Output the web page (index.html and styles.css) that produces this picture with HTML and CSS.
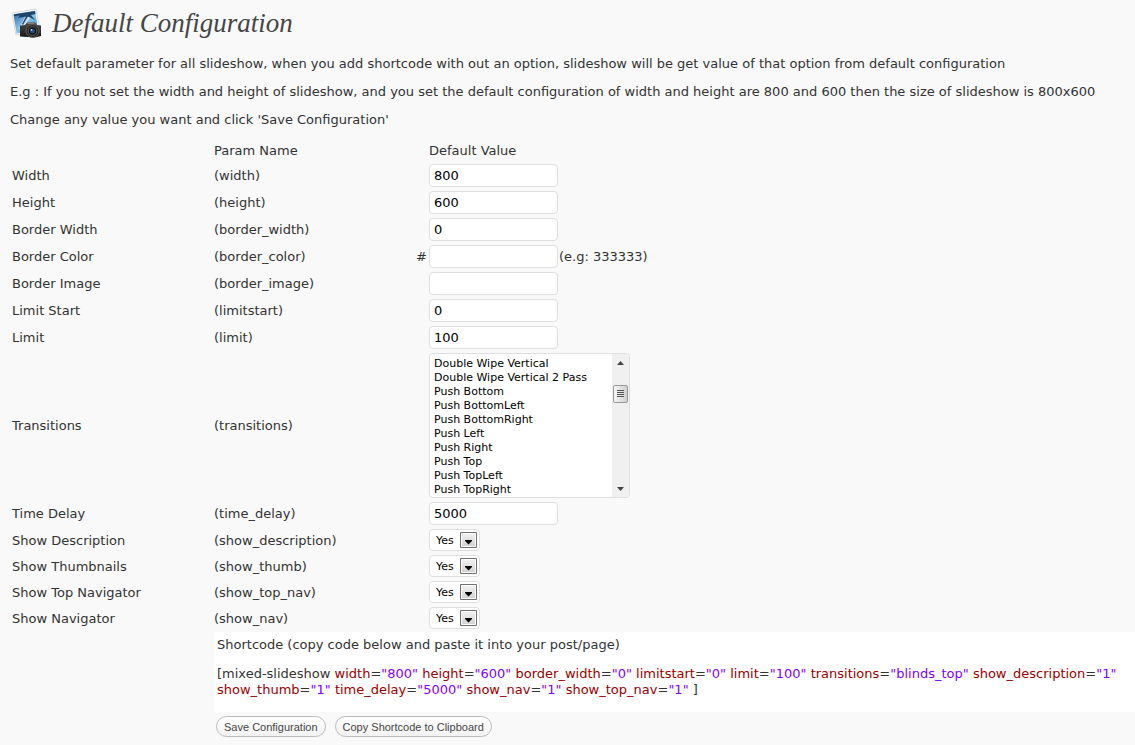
FILE: index.html
```html
<!DOCTYPE html>
<html lang="en">
<head>
<meta charset="utf-8">
<title>Default Configuration</title>
<link rel="stylesheet" href="styles.css">
</head>
<body>
<header class="page-head">
  <svg class="logo" width="32" height="32" viewBox="0 0 32 32" aria-hidden="true">
    <defs>
      <linearGradient id="sky" x1="0" y1="0" x2="1" y2="1"><stop offset="0" stop-color="#1d5a9c"/><stop offset=".5" stop-color="#8cc4e8"/><stop offset="1" stop-color="#1f74bd"/></linearGradient>
      <linearGradient id="cam" x1="0" y1="0" x2="0" y2="1"><stop offset="0" stop-color="#4d4a48"/><stop offset="1" stop-color="#171616"/></linearGradient>
    </defs>
    <path d="M1 5 25 1 29 23 5 27Z" fill="#fff" stroke="#c4c8cc" stroke-width=".7"/>
    <path d="M2.500 6.300 24 2.800 27 21 5.500 25.500Z" fill="url(#sky)"/>
    <path d="M14 9 8 21 14 18 19 9Z" fill="#e4f3fb" opacity=".8"/>
    <path d="M3 6.500 24 3 24.500 6 20 7 24 12 17 8.500 12 17 11 16 15 8.500 7 10 9 7.500 3 8Z" fill="#18395f" opacity=".9"/>
    <path d="M9 17.500 14 17 16 14.500H24L26 17 30 17.500V28L24 29.500 9 28.500Z" fill="url(#cam)"/>
    <path d="M16.500 15.500H23.500" stroke="#85807c"/>
    <circle cx="21.500" cy="23" r="6.500" fill="#252423" stroke="#77736f" stroke-width=".7"/>
    <circle cx="21.500" cy="23" r="4.300" fill="#080d15" stroke="#888" stroke-width=".6"/>
    <circle cx="21.500" cy="23" r="2.500" fill="#29496d"/>
    <circle cx="20.500" cy="21.800" r=".9" fill="#d4e6f5"/>
  </svg>
  <h1>Default Configuration</h1>
</header>
<main>
  <p>Set default parameter for all slideshow, when you add shortcode with out an option, slideshow will be get value of that option from default configuration</p>
  <p>E.g : If you not set the width and height of slideshow, and you set the default configuration of width and height are 800 and 600 then the size of slideshow is 800x600</p>
  <p>Change any value you want and click 'Save Configuration'</p>
  <form>
    <table class="params">
      <colgroup><col class="c-label"><col class="c-name"><col class="c-hash"><col></colgroup>
      <thead><tr><td></td><th scope="col">Param Name</th><td></td><th scope="col">Default Value</th></tr></thead>
      <tbody>
        <tr><td><label for="width">Width</label></td><td class="name">(width)</td><td></td><td><input type="text" id="width" value="800"></td></tr>
        <tr><td><label for="height">Height</label></td><td class="name">(height)</td><td></td><td><input type="text" id="height" value="600"></td></tr>
        <tr><td><label for="bw">Border Width</label></td><td class="name">(border_width)</td><td></td><td><input type="text" id="bw" value="0"></td></tr>
        <tr><td><label for="bc">Border Color</label></td><td class="name">(border_color)</td><td>#</td><td><input type="text" id="bc"><span class="hint">(e.g: 333333)</span></td></tr>
        <tr><td><label for="bi">Border Image</label></td><td class="name">(border_image)</td><td></td><td><input type="text" id="bi"></td></tr>
        <tr><td><label for="ls">Limit Start</label></td><td class="name">(limitstart)</td><td></td><td><input type="text" id="ls" value="0"></td></tr>
        <tr><td><label for="limit">Limit</label></td><td class="name">(limit)</td><td></td><td><input type="text" id="limit" value="100"></td></tr>
        <tr class="tall"><td><label for="transitions">Transitions</label></td><td class="name">(transitions)</td><td></td><td>
          <div class="listbox">
            <select class="list" id="transitions" multiple size="10"></select>
            <div class="scrollbar" aria-hidden="true">
              <svg width="17" height="17"><path d="M5 11 8.500 7 12 11Z" fill="#444"/></svg>
              <svg class="thumb" width="17" height="18">
                <defs><linearGradient id="grip"><stop stop-color="#f7f7f7"/><stop offset="1" stop-color="#cfcfcf"/></linearGradient></defs>
                <rect x="1.500" y=".5" width="14" height="17" rx="1.500" fill="url(#grip)" stroke="#979797"/>
                <path d="M5 5.500h7M5 7.500h7M5 9.500h7M5 11.500h7" stroke="#555"/>
              </svg>
              <svg width="17" height="17"><path d="M5 7 8.500 11 12 7Z" fill="#444"/></svg>
            </div>
          </div>
        </td></tr>
        <tr><td><label for="td">Time Delay</label></td><td class="name">(time_delay)</td><td></td><td><input type="text" id="td" value="5000"></td></tr>
        <tr class="pick"><td><label for="sd">Show Description</label></td><td class="name">(show_description)</td><td></td><td><select class="yes" id="sd"><option>Yes</option><option>No</option></select></td></tr>
        <tr class="pick"><td><label for="st">Show Thumbnails</label></td><td class="name">(show_thumb)</td><td></td><td><select class="yes" id="st"><option>Yes</option><option>No</option></select></td></tr>
        <tr class="pick"><td><label for="stn">Show Top Navigator</label></td><td class="name">(show_top_nav)</td><td></td><td><select class="yes" id="stn"><option>Yes</option><option>No</option></select></td></tr>
        <tr class="pick"><td><label for="sn">Show Navigator</label></td><td class="name">(show_nav)</td><td></td><td><select class="yes" id="sn"><option>Yes</option><option>No</option></select></td></tr>
      </tbody>
    </table>
    <div class="result">
      <section class="shortcode">
        <div>Shortcode (copy code below and paste it into your post/page)</div>
        <div class="code">[mixed-slideshow <b>width</b>=<i>"800"</i> <b>height</b>=<i>"600"</i> <b>border_width</b>=<i>"0"</i> <b>limitstart</b>=<i>"0"</i> <b>limit</b>=<i>"100"</i> <b>transitions</b>=<i>"blinds_top"</i> <b>show_description</b>=<i>"1"</i> <b>show_thumb</b>=<i>"1"</i> <b>time_delay</b>=<i>"5000"</i> <b>show_nav</b>=<i>"1"</i> <b>show_top_nav</b>=<i>"1"</i> ]</div>
      </section>
      <div class="actions"><button type="button">Save Configuration</button><button type="button">Copy Shortcode to Clipboard</button></div>
    </div>
  </form>
</main>
<script src="script.js"></script>
</body>
</html>
```
FILE: styles.css
```css
* { box-sizing: border-box; }
body {
  margin: 0;
  padding: 6px 0 8px 10px;
  background: #f9f9f9;
  color: #333;
  font: 13px/16px "DejaVu Sans", Verdana, sans-serif;
}
.page-head { display: flex; align-items: center; gap: 9px; height: 34px; }
.logo { display: block; margin-top: 2px; margin-left: 1px; }
h1 {
  margin: 0;
  color: #464646;
  font: italic 27px/34px Georgia, "Liberation Serif", serif;
}
main { padding-top: 16px; }
p { margin: 0 0 12px; }
.params { width: 100%; table-layout: fixed; border-collapse: collapse; }
.c-label, .c-name { width: 202px; }
.c-hash { width: 15px; }
.params td, .params th {
  height: 27px;
  padding: 0 2px;
  text-align: left;
  vertical-align: middle;
  font-weight: normal;
}
.params thead td, .params thead th { height: 22px; }
.params td:nth-child(4), .params th:last-child { padding-left: 0; }
.params .tall td { height: 149px; }
.params .pick td { height: 26px; }
.params .pick td:not(:last-child) { padding-top: 2px; }
input, .listbox, .yes {
  border: 1px solid #dfdfdf;
  border-radius: 4px;
  background: #fff;
  color: #000;
  vertical-align: middle;
}
input {
  width: 129px;
  height: 23px;
  padding: 3px 4px;
  font: 13px/15px "DejaVu Sans", Verdana, sans-serif;
}
.hint { padding-left: 1px; vertical-align: middle; }
.listbox {
  display: flex;
  width: 201px;
  height: 145px;
  overflow: hidden;
}
.list {
  flex: 1;
  min-width: 0;
  margin: 3px 0 0;
  padding: 0;
  border: 0;
  outline: 0;
  background: transparent;
  color: #000;
  font: 11px/14px "DejaVu Sans", Verdana, sans-serif;
  scrollbar-width: none;
}
.list option { height: 14px; min-height: 14px; padding: 0 4px; line-height: 14px; }
.scrollbar {
  display: flex;
  flex-direction: column;
  width: 17px;
  background: #f0f0f0;
}
.thumb { margin: 14px 0 auto; }
.yes {
  display: block;
  appearance: none;
  width: 51px;
  height: 22px;
  padding: 1px 20px 0 6px;
  background: #fff url("data:image/svg+xml,%3Csvg xmlns='http://www.w3.org/2000/svg' width='17' height='16'%3E%3Cdefs%3E%3ClinearGradient id='g' x2='0' y2='1'%3E%3Cstop stop-color='%23f4f4f4'/%3E%3Cstop offset='1' stop-color='%23cfcfcf'/%3E%3C/linearGradient%3E%3C/defs%3E%3Cpath d='M.5.5h16v15H.5z' fill='url(%23g)' stroke='%23707070'/%3E%3Cpath d='M1.500 1.500h14v13h-14z' fill='none' stroke='%23fff'/%3E%3Cpath d='M5 8h7v1L8.500 12.500 5 9z'/%3E%3C/svg%3E") right 2px center no-repeat;
  font: 11px/20px "DejaVu Sans", Verdana, sans-serif;
}
.result { display: flex; flex-direction: column; margin-left: 204px; }
.shortcode { min-height: 80px; margin-top: 1px; padding: 5px 3px 14px; background: #fff; }
.code { margin-top: 13px; }
.code b { color: #990000; font-weight: normal; }
.code i { color: #7f00ff; font-style: normal; }
.actions { display: flex; gap: 9px; padding: 4px 2px; }
button {
  height: 21px;
  padding: 0 7px;
  border: 1px solid #bbb;
  border-radius: 11px;
  background: linear-gradient(#fff, #f2f2f2);
  color: #464646;
  font: 11px/14px "Liberation Sans", Arial, sans-serif;
}
```
FILE: script.js
```js
const directions = ["Bottom", "BottomLeft", "BottomRight", "Left", "Right", "Top", "TopLeft", "TopRight"];
const names = [
  "Blinds Bottom", "Blinds Left", "Blinds Right", "Blinds Top",
  "Box In", "Box Out", "Double Wipe Horizontal", "Double Wipe Horizontal 2 Pass",
  "Double Wipe Vertical", "Double Wipe Vertical 2 Pass"
];
for (const effect of ["Push", "Slide", "Wipe", "Reveal", "Cover", "Fade", "Stripes"]) {
  for (const direction of directions) names.push(effect + " " + direction);
}
const list = document.getElementById("transitions");
for (const name of names) list.add(new Option(name));
list.scrollTop = list.options[8].offsetTop - list.options[0].offsetTop;
```
